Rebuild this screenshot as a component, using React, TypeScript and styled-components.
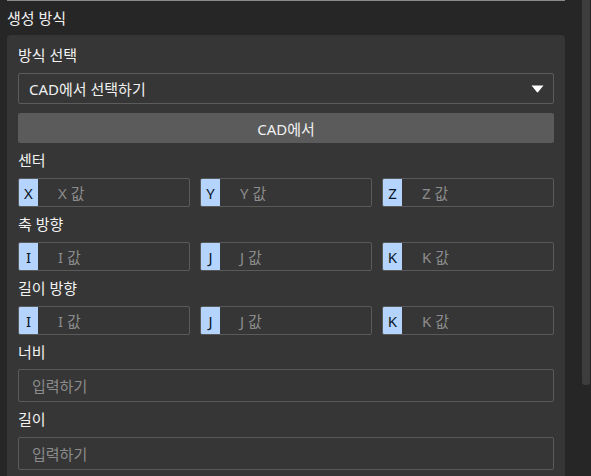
import React from "react";
import styled, { createGlobalStyle } from "styled-components";

const Global = createGlobalStyle`
  html, body { margin: 0; padding: 0; background: #262626; }
  body { font-family: "Noto Sans", "Noto Sans CJK KR", sans-serif; font-size: 15px; color: #f0f0f0; }
  * { box-sizing: border-box; }
`;

const Page = styled.div`
  display: flex;
  width: 591px;
  height: 476px;
  overflow: hidden;
  background: #262626;
`;

const Main = styled.div`
  flex: 1;
  display: flex;
  flex-direction: column;
  padding: 0 17px 0 7px;
`;

const TopRule = styled.div`
  height: 1px;
  background: #8a8a8a;
`;

const Title = styled.div`
  line-height: 20px;
  margin-top: 7px;
  color: #f2f2f2;
`;

const Card = styled.div`
  margin-top: 7px;
  flex: 1;
  background: #363636;
  border-radius: 4px 4px 0 0;
  padding: 10px 11px 0 11px;
  display: flex;
  flex-direction: column;
  gap: 7px;
`;

const Field = styled.div<{ $gap?: number }>`
  display: flex;
  flex-direction: column;
  gap: ${(p) => p.$gap ?? 8}px;
`;

const Label = styled.div`
  line-height: 20px;
  height: 20px;
  color: #f2f2f2;
`;

const Select = styled.div`
  height: 31px;
  border: 1px solid #5c5c5c;
  border-radius: 2px;
  background: #363636;
  display: flex;
  align-items: center;
  justify-content: space-between;
  padding: 0 9px 0 10px;
  color: #f0f0f0;
`;

const Button = styled.div`
  height: 30px;
  border-radius: 2px;
  background: #5b5b5b;
  display: flex;
  align-items: center;
  justify-content: center;
  color: #f0f0f0;
`;

const Row = styled.div`
  display: grid;
  grid-template-columns: repeat(3, 1fr);
  gap: 10px;
`;

const AxisInput = styled.div`
  height: 29px;
  border: 1px solid #5a5a5a;
  border-radius: 2px;
  display: flex;
  align-items: stretch;
  overflow: hidden;
`;

const Tag = styled.div`
  width: 19px;
  background: #b4d4fe;
  color: #0b1628;
  display: flex;
  align-items: center;
  justify-content: center;
`;

const Placeholder = styled.div`
  display: flex;
  align-items: center;
  padding-left: 20px;
  color: #8c8c8c;
`;

const TextInput = styled.div<{ $h: number }>`
  height: ${(p) => p.$h}px;
  border: 1px solid #5a5a5a;
  border-radius: 2px;
  display: flex;
  align-items: center;
  padding-left: 13px;
  color: #8c8c8c;
`;

const ScrollTrack = styled.div`
  width: 9px;
  display: flex;
  flex-direction: column;
`;

const Thumb = styled.div`
  width: 8px;
  height: 385px;
  background: #3d3d3d;
  border-radius: 0 0 3px 3px;
`;

const Caret = () => (
  <svg width="13" height="8" viewBox="0 0 13 8">
    <path d="M0.5 0.5 H12.5 L7.2 7 Q6.5 7.8 5.8 7 Z" fill="#ffffff" />
  </svg>
);

const Axis = ({ k }: { k: string }) => (
  <AxisInput>
    <Tag>{k}</Tag>
    <Placeholder>{k} 값</Placeholder>
  </AxisInput>
);

export default function App() {
  return (
    <Page>
      <Global />
      <Main>
        <TopRule />
        <Title>생성 방식</Title>
        <Card>
          <Field>
            <Label>방식 선택</Label>
            <Field $gap={9}>
              <Select>
                <span>CAD에서 선택하기</span>
                <Caret />
              </Select>
              <Button>CAD에서</Button>
            </Field>
          </Field>
          <Field>
            <Label>센터</Label>
            <Row>
              <Axis k="X" />
              <Axis k="Y" />
              <Axis k="Z" />
            </Row>
          </Field>
          <Field>
            <Label>축 방향</Label>
            <Row>
              <Axis k="I" />
              <Axis k="J" />
              <Axis k="K" />
            </Row>
          </Field>
          <Field>
            <Label>길이 방향</Label>
            <Row>
              <Axis k="I" />
              <Axis k="J" />
              <Axis k="K" />
            </Row>
          </Field>
          <Field $gap={7}>
            <Label>너비</Label>
            <TextInput $h={33}>입력하기</TextInput>
          </Field>
          <Field>
            <Label>길이</Label>
            <TextInput $h={33}>입력하기</TextInput>
          </Field>
        </Card>
      </Main>
      <ScrollTrack>
        <Thumb />
      </ScrollTrack>
    </Page>
  );
}
